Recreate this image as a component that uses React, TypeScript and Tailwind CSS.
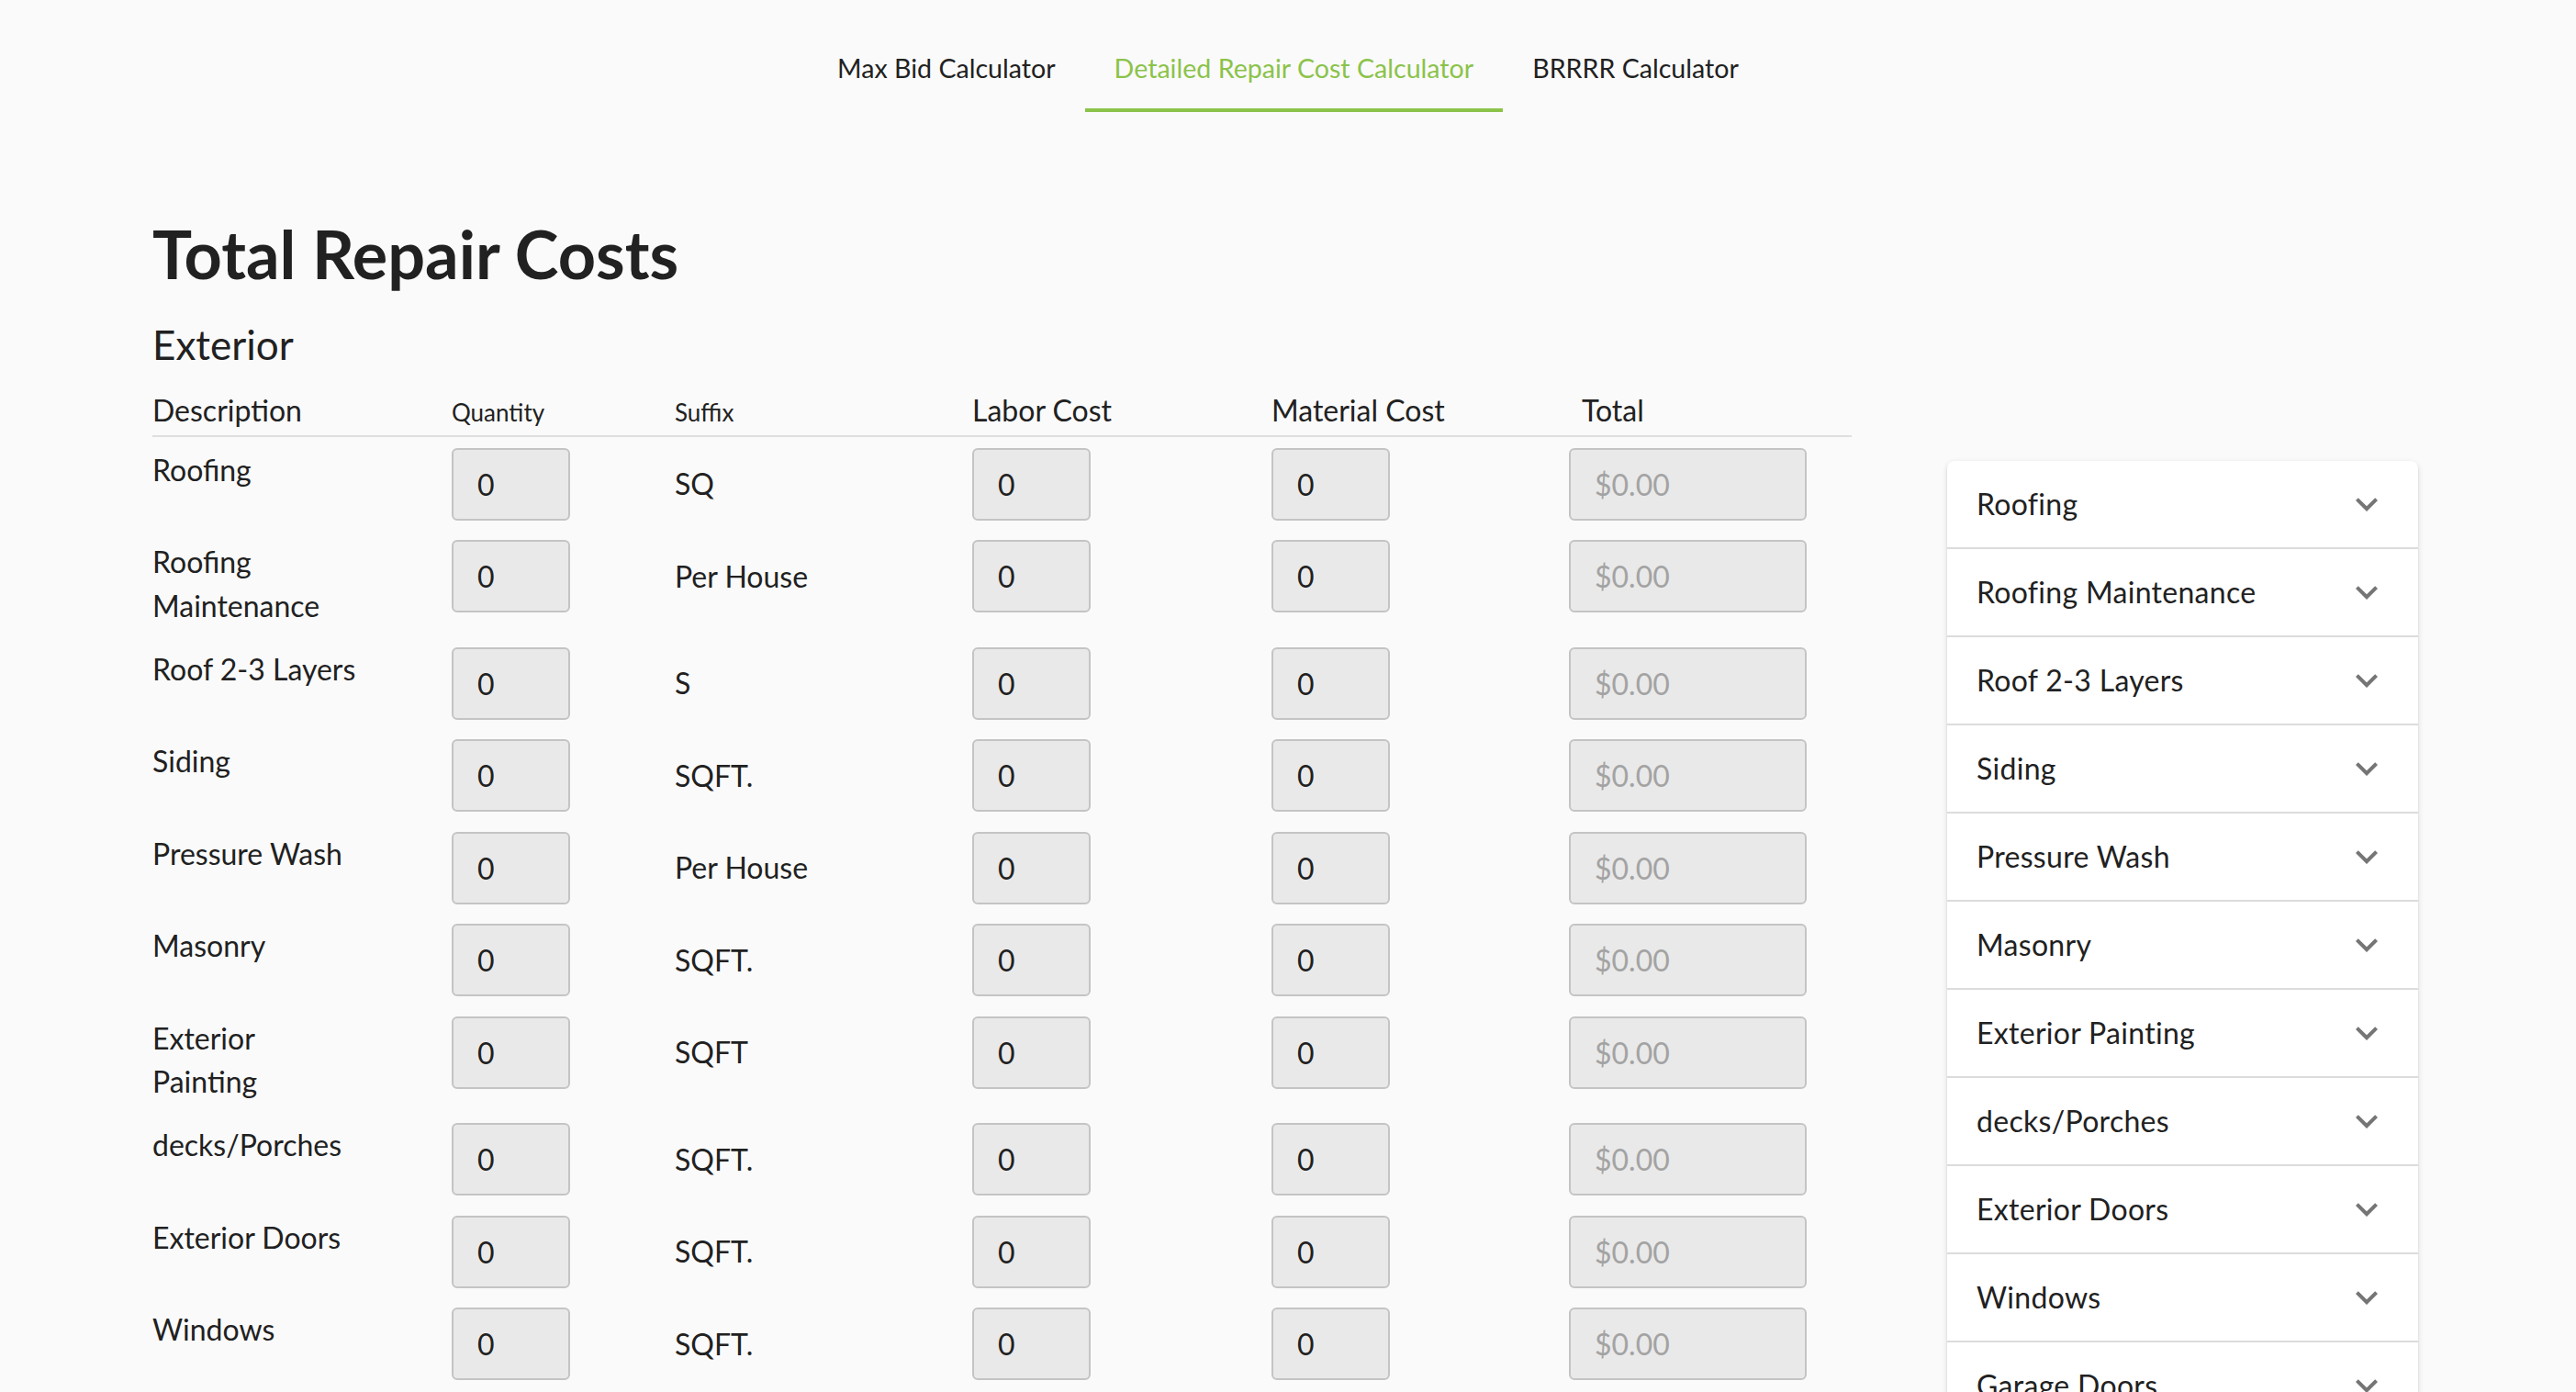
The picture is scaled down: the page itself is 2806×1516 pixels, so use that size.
import React from 'react';

const tabs = ['Max Bid Calculator', 'Detailed Repair Cost Calculator', 'BRRRR Calculator'];

const rows = [
  { label: 'Roofing', suffix: 'SQ' },
  { label: 'Roofing\nMaintenance', suffix: 'Per House' },
  { label: 'Roof 2-3 Layers', suffix: 'S' },
  { label: 'Siding', suffix: 'SQFT.' },
  { label: 'Pressure Wash', suffix: 'Per House' },
  { label: 'Masonry', suffix: 'SQFT.' },
  { label: 'Exterior\nPainting', suffix: 'SQFT' },
  { label: 'decks/Porches', suffix: 'SQFT.' },
  { label: 'Exterior Doors', suffix: 'SQFT.' },
  { label: 'Windows', suffix: 'SQFT.' },
  { label: 'Garage Doors', suffix: 'SQFT.' },
];

function ExpandMore() {
  return (
    <svg viewBox="0 0 24 24" className="h-[48px] w-[48px] fill-[#757575]">
      <path d="M16.59 8.59 12 13.17 7.41 8.59 6 10l6 6 6-6z" />
    </svg>
  );
}

function NumberBox({ wide = false }: { wide?: boolean }) {
  if (wide) {
    return (
      <input
        readOnly
        placeholder="$0.00"
        className="h-[79px] w-[259px] rounded-[6px] border-2 border-[#c4c4c4] bg-[#e9e9e9] pl-[26px] text-[32px] text-[#212121] outline-none placeholder:text-[#a3a3a3]"
      />
    );
  }
  return (
    <input
      defaultValue="0"
      className="h-[79px] w-[129px] rounded-[6px] border-2 border-[#c4c4c4] bg-[#e9e9e9] pl-[26px] text-[32px] text-[#212121] outline-none"
    />
  );
}

export default function App() {
  return (
    <div className="min-h-screen bg-[#fafafa] font-['Lato',sans-serif] text-[#212121]">
      {/* Tabs */}
      <nav className="flex justify-center pt-[26px]">
        {tabs.map((tab, i) => {
          const active = i === 1;
          return (
            <button
              key={tab}
              className={
                active
                  ? 'relative flex h-[96px] items-center px-[32px] text-[28.6px] text-[#8bc34a]'
                  : 'relative flex h-[96px] items-center px-[32px] text-[28.6px] text-[#212121]'
              }
            >
              {tab}
              {active && <span className="absolute bottom-0 left-0 right-0 h-[4px] bg-[#8bc34a]" />}
            </button>
          );
        })}
      </nav>

      <div className="flex gap-[104px] pl-[166px] pr-[172px] pt-[111px]">
        {/* Table */}
        <div className="flex-1">
          <h1 className="text-[72px] font-bold leading-[1.2]">Total Repair Costs</h1>
          <h2 className="mt-[30px] text-[44px] leading-[1.2]">Exterior</h2>

          <div className="mt-[26px] grid grid-cols-[326px_243px_324px_326px_324px_1fr] items-baseline border-b-2 border-[#dedede] pb-[7px] leading-[1.2]">
            <span className="text-[32px]">Description</span>
            <span className="text-[26px]">Quantity</span>
            <span className="text-[26px]">Suffix</span>
            <span className="text-[32px]">Labor Cost</span>
            <span className="text-[32px]">Material Cost</span>
            <span className="pl-[14px] text-[32px]">Total</span>
          </div>

          <div className="pt-[12px]">
            {rows.map((row) => (
              <div
                key={row.label}
                className="grid grid-cols-[326px_243px_324px_326px_324px_1fr] items-start pb-[21.5px] text-[32px]"
              >
                <span className="whitespace-pre-line leading-[47.5px]">{row.label}</span>
                <NumberBox />
                <span className="flex h-[79px] items-center">{row.suffix}</span>
                <NumberBox />
                <NumberBox />
                <NumberBox wide />
              </div>
            ))}
          </div>
        </div>

        {/* Accordion list */}
        <div className="mt-[269px] w-[513px] shrink-0 self-start rounded-[8px] bg-white shadow-[0_4px_2px_-2px_rgba(0,0,0,0.2),0_2px_2px_0_rgba(0,0,0,0.14),0_2px_6px_0_rgba(0,0,0,0.12)]">
          {rows.map((row, i) => (
            <div
              key={row.label}
              className={
                i === 0
                  ? 'flex h-[94px] items-center justify-between px-[32px]'
                  : 'flex h-[96px] items-center justify-between border-t-2 border-[#dcdcdc] px-[32px]'
              }
            >
              <span className="text-[32px] tracking-[0.3px]">{row.label.replace('\n', ' ')}</span>
              <ExpandMore />
            </div>
          ))}
        </div>
      </div>
    </div>
  );
}
